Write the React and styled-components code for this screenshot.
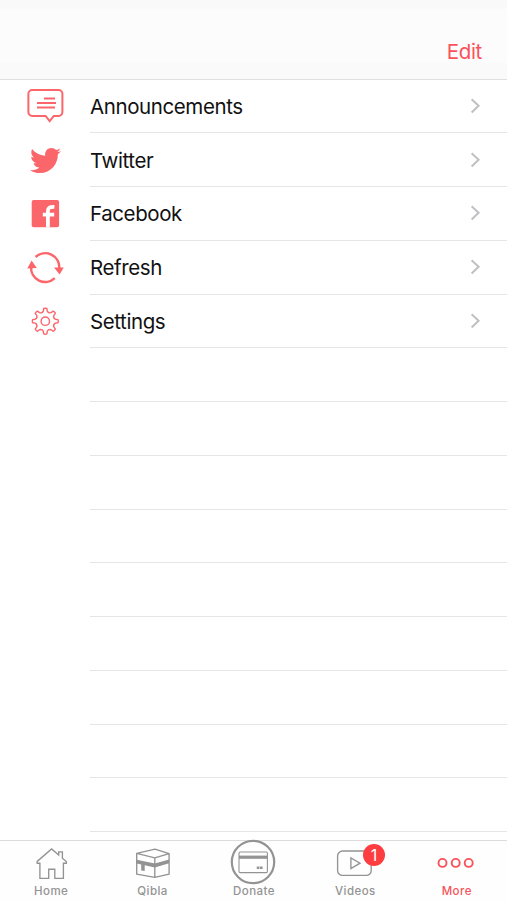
import * as React from 'react'
import styled, { createGlobalStyle } from 'styled-components'
import { FaTwitter } from 'react-icons/fa'

const menuItems = [
    { label: 'Announcements', icon: <AnnouncementIcon /> },
    { label: 'Twitter', icon: <FaTwitter size={31} /> },
    { label: 'Facebook', icon: <FacebookIcon /> },
    { label: 'Refresh', icon: <RefreshIcon /> },
    { label: 'Settings', icon: <GearIcon /> },
]

const tabs = [
    { label: 'Home', icon: <HomeIcon /> },
    { label: 'Qibla', icon: <QiblaIcon /> },
    { label: 'Donate', icon: <DonateIcon /> },
    { label: 'Videos', icon: <VideoIcon />, badge: 1 },
    { label: 'More', icon: <MoreIcon />, active: true },
]

// empty rows below the menu, they only show their separator
const emptyRows = Array.from({ length: 9 })

export default () => {
    return <Screen>
        <GlobalStyle />
        <Header>
            <EditButton>Edit</EditButton>
        </Header>
        <List>
            {menuItems.map(({ label, icon }) => <Row key={label}>
                <IconCell>{icon}</IconCell>
                <RowContent>
                    <RowLabel>{label}</RowLabel>
                    <Chevron />
                </RowContent>
            </Row>)}
            {emptyRows.map((v, i) => <Row key={i}>
                <IconCell />
                <RowContent />
            </Row>)}
        </List>
        <TabBar>
            {tabs.map(({ label, icon, badge, active }) => <Tab key={label} $active={active}>
                <TabIcon>
                    {icon}
                    {badge && <Badge>{badge}</Badge>}
                </TabIcon>
                <TabLabel>{label}</TabLabel>
            </Tab>)}
        </TabBar>
    </Screen>
}

function Chevron() {
    return <svg width="12" height="18" viewBox="0 0 12 18" fill="none" stroke="#c0c0c4" strokeWidth="2">
        <path d="M1.6 2.2 8.6 8.8 1.6 15.4" />
    </svg>
}

function AnnouncementIcon() {
    return <RowSvg viewBox="0 0 40 40" strokeWidth="2">
        <path d="M7.2 4H33.6a3.8 3.8 0 0 1 3.8 3.8V26.2a3.8 3.8 0 0 1-3.8 3.8H28.8L24.7 35.2 20.6 30H7.2a3.8 3.8 0 0 1-3.8-3.8V7.8A3.8 3.8 0 0 1 7.2 4Z" />
        <path d="M19 12.4H30M12 16.9H31M12 21.4H30" />
    </RowSvg>
}

function FacebookIcon() {
    return <RowSvg viewBox="0 0 40 40">
        <rect x="6.7" y="6" width="27.4" height="27.2" rx="2" fill="currentColor" stroke="none" />
        <path d="M22.9 33.6V17C22.9 13.6 24.8 12.7 29.4 12.9M17.8 20.6H29.2" stroke="#ffffff" strokeWidth="3.8" />
    </RowSvg>
}

function RefreshIcon() {
    return <RowSvg viewBox="0 0 40 40" strokeWidth="2.5">
        <path d="M10.6 9A14.1 14.1 0 0 1 34.3 20.2" />
        <path d="M29.8 30.1A14.1 14.1 0 0 1 6.1 18.7" />
        <path d="M2.3 20.5 6.6 12.6 11.8 20ZM29 19.6 38.8 19.4 34.6 26.6Z" fill="currentColor" stroke="none" />
    </RowSvg>
}

function GearIcon() {
    return <RowSvg viewBox="0 0 40 40" strokeWidth="1.4" strokeLinejoin="round">
        <path d={gearPath(20.3, 20.2, 12.8, 9.6)} />
        <circle cx="20.3" cy="20.2" r="4.2" />
    </RowSvg>
}

// eight teeth, first one points up
const gearPath = (cx, cy, outer, inner) => {
    const point = (r, deg) => {
        const a = (deg - 90) * Math.PI / 180
        return `${(cx + r * Math.cos(a)).toFixed(2)} ${(cy + r * Math.sin(a)).toFixed(2)}`
    }
    let d = `M${point(outer, -7)}`
    for (let i = 0; i < 8; i++) {
        const t = i * 45
        d += `Q${point(outer + 0.5, t)} ${point(outer, t + 7)}`
        d += `L${point(inner + 0.7, t + 11)}`
        d += `Q${point(inner - 1.3, t + 22.5)} ${point(inner + 0.7, t + 34)}`
        d += `L${point(outer, t + 38)}`
    }
    return d + 'Z'
}

function HomeIcon() {
    return <TabSvg viewBox="0 0 46 46">
        <path d="M11.9 24.2H9.2V22.4L23.6 9.9 30.7 16V12.8H34.4V19.2L38.3 22.5V24.2H35.4V39.3H26.8V30.2H20.7V39.3H11.9Z" />
    </TabSvg>
}

function QiblaIcon() {
    return <TabSvg viewBox="0 0 46 46" strokeLinejoin="round">
        <path d="M7.7 14.4 26 10.1 40.1 14.6 25.8 18.9ZM7.7 14.4V35.2L25.8 38.3 40.1 35.2V14.6M25.8 18.9V38.3" />
        <path d="M7.7 20.8 25.8 24.6 40.1 20.4V24.2L25.8 28.4 7.7 24.4Z" fill="currentColor" stroke="none" />
        <path d="M12.2 25V31.4L15.7 32V25.5Z" fill="currentColor" stroke="none" />
    </TabSvg>
}

function DonateIcon() {
    return <TabSvg viewBox="0 0 46 46">
        <circle cx="23" cy="23" r="21.2" strokeWidth="2.2" />
        <rect x="9" y="13" width="28.4" height="20.6" rx="1.2" strokeWidth="1.1" />
        <path d="M9 18.2H37.4" strokeWidth="3.2" />
        <path d="M26.8 28.8H32.6" strokeWidth="2.6" strokeDasharray="2.6 0.6" />
    </TabSvg>
}

function VideoIcon() {
    return <TabSvg viewBox="0 0 46 46">
        <rect x="5.6" y="12" width="33.6" height="24.4" rx="5" />
        <path d="M18.9 18.9V29.5L28 24.2Z" />
    </TabSvg>
}

function MoreIcon() {
    return <TabSvg viewBox="0 0 46 46" strokeWidth="1.9">
        <circle cx="9.5" cy="23.9" r="4" />
        <circle cx="22.7" cy="23.9" r="4" />
        <circle cx="35.7" cy="23.9" r="4" />
    </TabSvg>
}

const GlobalStyle = createGlobalStyle`
body{
    margin:0;
    background:#ffffff;
}
`

const Screen = styled.div`
width:100%;
height:900px;
display:grid;
grid-template-rows:79.5px 1fr 60px;
overflow:hidden;
background:#ffffff;
font-family:Inter, "Liberation Sans", sans-serif;
`

const Header = styled.header`
display:flex;
justify-content:flex-end;
align-items:flex-end;
padding:0 25px 15px 0;
box-sizing:border-box;
border-bottom:1px solid #e0e0e0;
background:linear-gradient(#f9f9f9 8px, #fcfcfc 9px, #fcfcfc 62px, #fafafa 64px);
`

const EditButton = styled.button`
border:none;
padding:0;
background:none;
font-family:inherit;
font-size:20.5px;
line-height:24px;
letter-spacing:-0.3px;
color:#f8535a;
`

const List = styled.div`
min-height:0;
overflow:hidden;
`

const Row = styled.div`
height:53.75px;
display:grid;
grid-template-columns:90px auto;
`

const IconCell = styled.div`
display:flex;
justify-content:center;
align-items:center;
color:#fb666b;
`

const RowContent = styled.div`
display:flex;
justify-content:space-between;
align-items:center;
padding-right:25px;
border-bottom:1px solid #e6e6e8;
`

const RowLabel = styled.span`
padding-top:2px;
font-size:20.5px;
line-height:24px;
letter-spacing:-0.4px;
color:#111111;
`

const RowSvg = styled.svg`
width:40px;
height:40px;
fill:none;
stroke:currentColor;
`

const TabBar = styled.nav`
display:grid;
grid-template-columns:repeat(5, 1fr);
box-sizing:border-box;
border-top:1px solid #dcdcdc;
background:#fefefe;
`

const Tab = styled.div`
display:flex;
flex-direction:column;
align-items:center;
color:${({ $active }) => $active ? '#f8535a' : '#939393'};
`

const TabIcon = styled.div`
position:relative;
height:46px;
margin-top:-2px;
`

const TabSvg = styled.svg`
display:block;
width:46px;
height:46px;
fill:none;
stroke:currentColor;
stroke-width:${({ strokeWidth }) => strokeWidth || 1.35};
`

const TabLabel = styled.span`
margin-top:-1px;
padding-left:1px;
font-size:11.5px;
font-weight:500;
line-height:14px;
letter-spacing:0.45px;
`

const Badge = styled.span`
position:absolute;
top:5px;
right:-7px;
width:22px;
height:22px;
border-radius:50%;
background:#fd3d40;
color:#ffffff;
font-size:16px;
line-height:22px;
text-align:center;
`
